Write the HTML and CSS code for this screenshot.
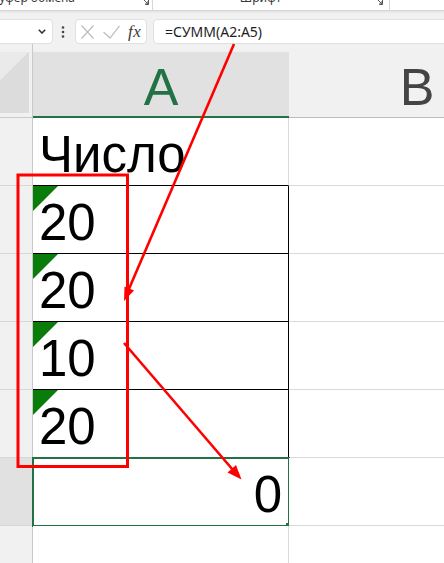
FILE: index.html
```html
<!DOCTYPE html>
<html lang="ru">
<head>
<meta charset="utf-8">
<title>Excel</title>
<link rel="stylesheet" href="styles.css">
</head>
<body>
<div class="page">
  <div class="ribbon">
    <div class="rgroup g1">
      <span class="rlabel lab1">Буфер обмена</span>
      <svg class="launch" width="9" height="9" viewBox="0 0 9 9"><path d="M0.5 3.5V0.5H8.5V8.5H5.5" fill="none" stroke="#555" stroke-width="1"/><path d="M3 3L8 8M8 5V8H5" fill="none" stroke="#555" stroke-width="1"/></svg>
    </div>
    <div class="rsep"></div>
    <div class="rgroup g2">
      <span class="rlabel lab2">Шрифт</span>
      <svg class="launch" width="9" height="9" viewBox="0 0 9 9"><path d="M0.5 3.5V0.5H8.5V8.5H5.5" fill="none" stroke="#555" stroke-width="1"/><path d="M3 3L8 8M8 5V8H5" fill="none" stroke="#555" stroke-width="1"/></svg>
    </div>
    <div class="rsep"></div>
  </div>

  <div class="fbar">
    <div class="box namebox">
      <svg width="8" height="5" viewBox="0 0 8 5"><polyline points="0.8,0.8 4,4 7.2,0.8" fill="none" stroke="#333" stroke-width="1.6"/></svg>
    </div>
    <div class="dots">
      <svg width="4" height="12" viewBox="0 0 4 12"><circle cx="2" cy="1.5" r="1.3" fill="#444"/><circle cx="2" cy="6" r="1.3" fill="#444"/><circle cx="2" cy="10.5" r="1.3" fill="#444"/></svg>
    </div>
    <div class="box fbtns">
      <svg class="ico-x" width="13" height="14" viewBox="0 0 13 14"><path d="M0.5 0.5L12.5 13.5M12.5 0.5L0.5 13.5" stroke="#bdbdbd" stroke-width="1.2" fill="none"/></svg>
      <svg class="ico-ok" width="17" height="14" viewBox="0 0 17 14"><polyline points="0.5,7 7,13 16.5,0.8" fill="none" stroke="#bdbdbd" stroke-width="1.2"/></svg>
      <span class="fx">fx</span>
    </div>
    <div class="box finput">=СУММ(A2:A5)</div>
  </div>

  <div class="sheet">
    <div class="corner-wrap"><div class="corner"></div></div>
    <div class="hdr-a">A</div>
    <div class="hdr-b">B</div>

    <div class="rh"></div>
    <div class="c a top">Число</div>
    <div class="c b"></div>

    <div class="rh"></div>
    <div class="c a boxed flag">20</div>
    <div class="c b"></div>

    <div class="rh"></div>
    <div class="c a boxed flag">20</div>
    <div class="c b"></div>

    <div class="rh"></div>
    <div class="c a boxed flag">10</div>
    <div class="c b"></div>

    <div class="rh"></div>
    <div class="c a boxed flag">20</div>
    <div class="c b"></div>

    <div class="rh rh-sel"></div>
    <div class="c a sel">0</div>
    <div class="c b"></div>

    <div class="rh"></div>
    <div class="c a"></div>
    <div class="c b"></div>
  </div>

  <svg class="annot" width="444" height="563" viewBox="0 0 444 563">
    <rect x="18" y="175" width="109.5" height="291.5" fill="none" stroke="#ff0000" stroke-width="3"/>
    <line x1="234" y1="44" x2="128.5" y2="290" stroke="#ff0000" stroke-width="2.6"/>
    <polygon points="124,301 134,290.5 124.5,286.5" fill="#ff0000"/>
    <line x1="124" y1="343" x2="233" y2="470" stroke="#ff0000" stroke-width="2.6"/>
    <polygon points="241.5,479.5 236,465 227.5,472.5" fill="#ff0000"/>
  </svg>
</div>
</body>
</html>
```

FILE: styles.css
```css
html, body {
  margin: 0;
  padding: 0;
}

body {
  background: #f1f1f1;
  font-family: "Noto Sans", "Open Sans", sans-serif;
}

.page {
  position: relative;
  width: 444px;
  height: 563px;
  overflow: hidden;
  background: #f1f1f1;
}

/* ribbon strip */
.ribbon {
  height: 10px;
  display: flex;
  background: #ffffff;
  border-bottom: 1px solid #d6d6d6;
  box-shadow: 0 1px 2px rgba(0, 0, 0, 0.08);
  overflow: hidden;
}

.rgroup {
  display: flex;
  align-items: flex-start;
}

.g1 {
  width: 152px;
}

.g2 {
  width: 236px;
}

.rlabel {
  display: block;
  font-size: 12px;
  line-height: 12px;
  margin-top: -8px;
  color: #3b3b3b;
  white-space: nowrap;
}

.lab1 {
  margin-left: -8px;
}

.lab2 {
  flex: 1;
  text-align: center;
}

.launch {
  flex: none;
  margin-top: -4px;
  margin-left: auto;
  margin-right: 3px;
}

.g2 .launch {
  margin-left: 6px;
  margin-right: 6px;
}

.rsep {
  width: 1px;
  background: #d6d6d6;
}

/* formula bar */
.fbar {
  height: 33px;
  display: flex;
  align-items: flex-end;
}

.box {
  height: 25px;
  box-sizing: border-box;
  background: #ffffff;
  border: 1px solid #e0e0e0;
  border-radius: 4px;
  display: flex;
  align-items: center;
}

.namebox {
  width: 63px;
  margin-left: -10px;
  justify-content: flex-end;
  padding-right: 6px;
}

.dots {
  width: 6px;
  height: 25px;
  margin-left: 7px;
  display: flex;
  align-items: center;
  justify-content: center;
}

.fbtns {
  width: 72px;
  margin-left: 9px;
  padding-left: 5px;
}

.ico-x {
  margin-top: 1px;
}

.ico-ok {
  margin-left: 9px;
  margin-top: 1px;
}

.fx {
  margin-left: 8px;
  font-family: "Liberation Serif", serif;
  font-style: italic;
  font-size: 17px;
  line-height: 17px;
  color: #3a3a3a;
  letter-spacing: 0.5px;
}

.finput {
  flex: 1;
  margin-left: 6px;
  margin-right: -10px;
  padding-left: 11px;
  font-size: 14px;
  color: #1e1e1e;
  border-top-right-radius: 0;
  border-bottom-right-radius: 0;
}

/* sheet grid */
.sheet {
  display: grid;
  grid-template-columns: 33px 256px 256px;
  grid-template-rows: 74px repeat(7, 68px);
}

.corner-wrap {
  box-sizing: border-box;
  padding: 8px 3px 4px 0;
  border-right: 1px solid #c9c9c9;
  border-bottom: 1px solid #c9c9c9;
  background: #f1f1f1;
}

.corner {
  height: 100%;
  background: linear-gradient(135deg, #eaeaea 32%, #dcdcdc 32%);
}

.hdr-a {
  margin-top: 8px;
  box-sizing: border-box;
  background: #e1e1e1;
  border-bottom: 2px solid #217346;
  display: flex;
  justify-content: center;
  align-items: flex-end;
  padding-bottom: 3px;
  font-family: "Liberation Sans", Arial, sans-serif;
  font-size: 52px;
  line-height: 1;
  color: #217346;
}

.hdr-b {
  box-sizing: border-box;
  background: #f1f1f1;
  border-bottom: 1px solid #bcbcbc;
  display: flex;
  justify-content: center;
  align-items: flex-end;
  padding-bottom: 4px;
  font-family: "Liberation Sans", Arial, sans-serif;
  font-size: 52px;
  line-height: 1;
  color: #444444;
}

.rh {
  box-sizing: border-box;
  background: #f1f1f1;
  border-right: 1px solid #c9c9c9;
  border-bottom: 1px solid #d7d7d7;
}

.rh-sel {
  background: #e1e1e1;
}

.c {
  position: relative;
  box-sizing: border-box;
  background: #ffffff;
  border-right: 1px solid #dadada;
  border-bottom: 1px solid #dadada;
  display: flex;
  align-items: flex-end;
  padding: 0 6px 5px 6px;
  font-family: "Liberation Sans", Arial, sans-serif;
  font-size: 51px;
  line-height: 1;
  color: #000000;
}

.c.b {
  border-right: none;
}

.c.top {
  border-bottom-color: #000000;
}

.c.boxed {
  border-right-color: #000000;
  border-bottom-color: #000000;
}

.flag::before {
  content: "";
  position: absolute;
  top: 0;
  left: 0;
  width: 0;
  height: 0;
  border-top: 25px solid #0a7c0a;
  border-right: 25px solid transparent;
}

.sel {
  justify-content: flex-end;
  outline: 2px solid #217346;
  outline-offset: -1px;
}

.sel::after {
  content: "";
  position: absolute;
  right: -3px;
  bottom: -3px;
  width: 5px;
  height: 5px;
  background: #217346;
}

/* annotation overlay */
.annot {
  position: absolute;
  top: 0;
  left: 0;
  pointer-events: none;
}
```
